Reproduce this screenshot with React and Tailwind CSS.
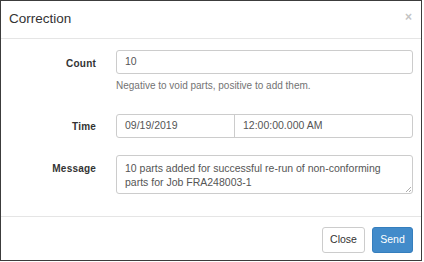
export default function App() {
  return (
    <div className="w-[424px] h-[262px] bg-white font-['Liberation_Sans',Arial,sans-serif] text-[#333]">
      <div className="w-[422px] h-[261px] border border-[#3c3c3c] flex flex-col">
        <div className="h-[38px] shrink-0 flex items-center justify-between pl-[8px] pr-[9px] border-b border-[#e5e5e5]">
          <span className="text-[13.5px]">Correction</span>
          <span className="text-[12px] font-bold text-[#c4c4c4] leading-none -mt-[6px]">×</span>
        </div>
        <div className="flex-1 pt-[11px] pr-[8px]">
          <div className="flex">
            <label className="w-[95px] text-right text-[10px] font-bold pt-[6px] tracking-[0.2px]">Count</label>
            <div className="ml-[20px] flex-1">
              <div className="h-[24px] border border-[#ccc] rounded-[3px] px-[8px] flex items-center text-[10.5px] text-[#555]">10</div>
              <div className="mt-[4px] text-[10px] text-[#737373]">Negative to void parts, positive to add them.</div>
            </div>
          </div>
          <div className="flex mt-[21px]">
            <label className="w-[95px] text-right text-[10px] font-bold pt-[5px] tracking-[0.2px]">Time</label>
            <div className="ml-[20px] flex-1 flex h-[24px] border border-[#ccc] rounded-[3px] text-[10.5px] text-[#555]">
              <div className="w-[118px] px-[8px] flex items-center border-r border-[#ccc]">09/19/2019</div>
              <div className="flex-1 px-[8px] flex items-center">12:00:00.000 AM</div>
            </div>
          </div>
          <div className="flex mt-[17px]">
            <label className="w-[95px] text-right text-[10px] font-bold pt-[6px] tracking-[0.2px]">Message</label>
            <div className="ml-[20px] flex-1 relative h-[39px] border border-[#ccc] rounded-[3px] px-[8px] pt-[5px] text-[10.5px] leading-[14px] text-[#555]">
              10 parts added for successful re-run of non-conforming parts for Job FRA248003-1
              <svg className="absolute right-[1px] bottom-[1px]" width="6" height="6" viewBox="0 0 6 6">
                <path d="M6 1L1 6M6 4L4 6" stroke="#999" strokeWidth="0.8" />
              </svg>
            </div>
          </div>
        </div>
        <div className="h-[44px] shrink-0 border-t border-[#e5e5e5] flex items-start justify-end gap-[7px] pt-[10px] pr-[8px]">
          <button className="h-[26px] w-[43px] border border-[#ccc] rounded-[3px] bg-white text-[10.5px] text-[#333]">Close</button>
          <button className="h-[26px] w-[41px] border border-[#357ebd] rounded-[3px] bg-[#428bca] text-[10.5px] text-white">Send</button>
        </div>
      </div>
    </div>
  );
}
